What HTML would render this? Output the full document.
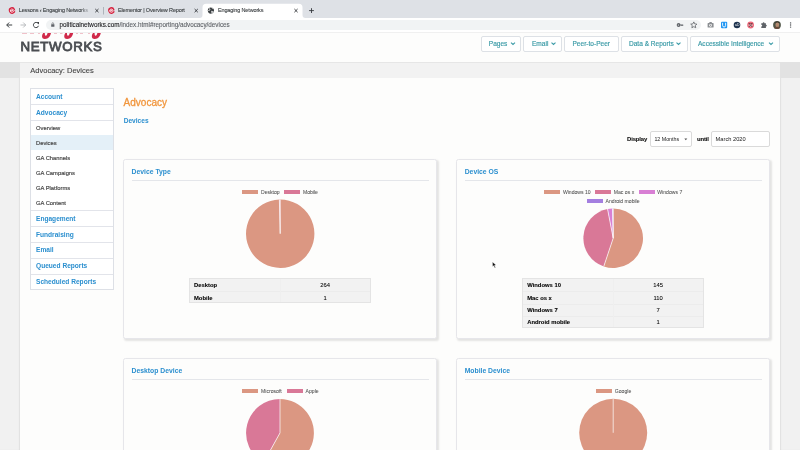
<!DOCTYPE html>
<html><head><meta charset="utf-8">
<style>
*{margin:0;padding:0;box-sizing:border-box}
html,body{width:800px;height:450px;overflow:hidden;background:#fdfdfc;will-change:transform;font-family:"Liberation Sans",sans-serif;position:relative}
.a{position:absolute;white-space:nowrap;line-height:0}
.ss,.nbt{-webkit-text-stroke:.16px currentColor}
.crumb{-webkit-text-stroke:.1px currentColor}
.leg,.tn{-webkit-text-stroke:.06px currentColor}
.h1{-webkit-text-stroke:.3px currentColor}
.inpt{-webkit-text-stroke:0}
#tabbar{left:0;top:0;width:800px;height:18px;background:#dee1e6}
.tabt{font-size:5.5px;letter-spacing:-.14px;color:#3c4043;-webkit-text-stroke:.1px currentColor}
.x{width:6px;height:6px}
#toolbar{left:0;top:18px;width:800px;height:14.5px;background:#fff;border-bottom:1px solid #f0f0f0;line-height:normal}
#pill{left:46px;top:19.9px;width:655px;height:10.4px;border-radius:5.2px;background:#f1f3f4;line-height:normal}
.url{font-size:6.3px;color:#202124;-webkit-text-stroke:.1px currentColor}
.url span{color:#5f6368}
#outerL{left:0;top:62px;width:20px;height:388px;background:#f1f1f1;box-shadow:inset -1px 0 1px #e0e0e0;line-height:normal}
#outerR{left:780px;top:62px;width:20px;height:388px;background:#f1f1f1;box-shadow:inset 1px 0 1px #e0e0e0;line-height:normal}
.bandO{top:62px;height:16px;width:20px;background:#e2e2e2;line-height:normal}
#band{left:20px;top:62px;width:760px;height:16px;background:#f2f2f2;border-top:1px solid #e6e6e6;line-height:normal}
.crumb{font-size:7.5px;color:#444}
.nb{top:36px;height:15.8px;border:1px solid #dde1e6;border-radius:2px;background:#fff;line-height:normal}
.nbt{font-size:6.55px;color:#3a9aa6}
#side{left:30px;top:88px;width:83.6px;height:201.6px;border:1px solid #dde0e6;background:#fff;line-height:normal}
.hl{left:31px;top:135px;width:81.6px;height:15.4px;background:#e4f0f8;line-height:normal}
.dv{left:31px;width:81.6px;height:1px;background:#e2e4ea;line-height:normal}
.sb{font-size:6.6px;font-weight:bold;color:#2b8fcf}
.ss{font-size:5.8px;color:#444}
.h1{font-size:10px;color:#f1963d}
.h2{font-size:6.6px;font-weight:bold;color:#2b8fcf}
.card{width:313.6px;height:180px;border:1px solid #e6e6ea;border-radius:2.5px;background:#fdfdfc;box-shadow:1.5px 1.5px 2px rgba(0,0,0,0.10);line-height:normal}
.ct{font-size:6.8px;font-weight:bold;color:#2b8fcf}
.sep{width:297px;height:1px;background:#e4e6ea;line-height:normal}
.leg{font-size:5.1px;color:#555}
.box{height:4px;width:16px;line-height:normal}
.tb{background:#f2f2f2;border:1px solid #e4e4e4;line-height:normal}
.tr{height:1px;background:#ececec;line-height:normal}
.tc{width:1px;background:#efefef;line-height:normal}
.td{font-size:5.85px;color:#000;font-weight:bold;-webkit-text-stroke:.08px #000}
.tn{font-size:5.85px;color:#000}
.inp{border:1px solid #dadada;border-radius:2px;background:#fff;line-height:normal}
.lab{font-size:5.95px;letter-spacing:-.14px;font-weight:bold;color:#111;-webkit-text-stroke:.1px #111}
.inpt{font-size:5.3px;color:#1a1a1a}
</style></head><body>
<!-- browser chrome -->
<div id="tabbar" class="a"></div>
<div id="toolbar" class="a"></div>
<div id="pill" class="a"></div>
<svg class="a" style="left:0;top:0" width="800" height="33" viewBox="0 0 800 33">
  <!-- active tab -->
  <path d="M199.5 18 Q202.5 18 202.5 15 L202.5 7.5 Q202.5 3.8 206.2 3.8 L298.8 3.8 Q302.5 3.8 302.5 7.5 L302.5 15 Q302.5 18 305.5 18 Z" fill="#fff"/>
  <!-- favicons -->
  <g transform="translate(12 10.5) rotate(-18)"><ellipse rx="3.2" ry="3.35" fill="#d5223f"/><path d="M-1.7 .1 H1.5 Q1.4 -1.5 -.1 -1.5 Q-1.7 -1.5 -1.7 .2 Q-1.7 1.7 .1 1.7 Q1 1.7 1.6 1.1" fill="none" stroke="#fff" stroke-width=".75"/><path d="M1.2 .7 L3.3 .5 L3.3 2 Z" fill="#dee1e6"/></g>
  <g transform="translate(111.4 10.5) rotate(-18)"><ellipse rx="3.2" ry="3.35" fill="#d5223f"/><path d="M-1.7 .1 H1.5 Q1.4 -1.5 -.1 -1.5 Q-1.7 -1.5 -1.7 .2 Q-1.7 1.7 .1 1.7 Q1 1.7 1.6 1.1" fill="none" stroke="#fff" stroke-width=".75"/><path d="M1.2 .7 L3.3 .5 L3.3 2 Z" fill="#dee1e6"/></g>
  <circle cx="210.9" cy="10.6" r="3.1" fill="#3c4043"/>
  <path d="M209 8.3 q1.2 .6 1 1.6 q-.6 .8-1.8 .6 M211.5 11.2 l1.8 .5 l-1.3 1.7 z M211.6 7.7 q.8 1 1.9 .9" fill="none" stroke="#fff" stroke-width=".7"/>
  <!-- close x -->
  <g stroke="#36393d" stroke-width=".95">
    <path d="M95.3 9 l3.2 3.2 M98.5 9 l-3.2 3.2"/>
    <path d="M194.6 9 l3.2 3.2 M197.8 9 l-3.2 3.2"/>
    <path d="M294.4 9 l3.2 3.2 M297.6 9 l-3.2 3.2"/>
    <path d="M311.5 8.2 v4.8 M309.1 10.6 h4.8" stroke-width=".9"/>
  </g>
  <rect x="103" y="7" width=".7" height="7.5" fill="#9aa0a6"/>
  <!-- nav -->
  <g fill="none" stroke="#3c4043" stroke-width="1">
    <path d="M12.2 25 h-5.4 M9.2 22.5 l-2.5 2.5 l2.5 2.5"/>
    <path d="M20.5 25 h5.2 M23.2 22.5 l2.5 2.5 l-2.5 2.5" stroke="#a9acb0" stroke-width=".8"/>
    <path d="M38.2 23.6 a2.6 2.6 0 1 0 .3 2.2"/>
  </g>
  <path d="M36.6 22 h2.4 v2.4 z" fill="#3c4043"/>
</svg>
<div class="a tabt" style="left:18.75px;width:72px;overflow:hidden;line-height:normal;top:7.4px;-webkit-mask-image:linear-gradient(90deg,#000 85%,transparent)">Lessons ‹ Engaging Networks</div>
<div class="a tabt" style="left:118px;top:7.4px;line-height:normal">Elementor | Overview Report</div>
<div class="a tabt" style="left:218px;top:7.4px;line-height:normal">Engaging Networks</div>

<svg class="a" style="left:0;top:18px" width="800" height="14" viewBox="0 18 800 14">
  <rect x="51.2" y="24.2" width="3.2" height="2.6" rx=".3" fill="#5f6368"/>
  <path d="M52 24.3 v-.8 a.8 .8 0 0 1 1.6 0 v.8" fill="none" stroke="#5f6368" stroke-width=".6"/>
  <!-- key -->
  <circle cx="678.6" cy="25" r="1.9" fill="#5f6368"/><circle cx="678.4" cy="25" r=".6" fill="#f1f3f4"/>
  <path d="M680.2 24.5 h3 v1.6 h-.8 v-.6 h-.6 v.6 h-.6 v-.6 h-1 z" fill="#5f6368"/>
  <!-- star -->
  <path d="M693.8 21.9 l.95 2 l2.15 .25 l-1.6 1.45 l.45 2.15 l-1.95 -1.1 l-1.95 1.1 l.45 -2.15 l-1.6 -1.45 l2.15 -.25 z" fill="none" stroke="#5f6368" stroke-width=".8"/>
  <!-- camera -->
  <path d="M707.6 23.4 q0-.5 .5-.5 h1 l.6-.8 h1.8 l.6 .8 h1 q.5 0 .5 .5 v3.7 q0 .5-.5 .5 h-5 q-.5 0-.5-.5 z" fill="#8c8f93"/>
  <circle cx="710.6" cy="25.3" r="1.35" fill="#fff"/><circle cx="710.6" cy="25.3" r=".75" fill="#8c8f93"/>
  <!-- blue U -->
  <rect x="721" y="21.8" width="6.2" height="6.4" rx="1" fill="#2196f3"/>
  <path d="M722.6 22.8 v2.6 q0 1.6 1.5 1.6 q1.5 0 1.5-1.6 v-2.6" fill="none" stroke="#fff" stroke-width=".9"/>
  <!-- dark circle -->
  <circle cx="737" cy="25" r="3.3" fill="#1f3550"/>
  <text x="735" y="26.4" font-size="3.4" fill="#fff" font-family="Liberation Sans">aD</text>
  <!-- red target -->
  <circle cx="750.6" cy="25" r="3.4" fill="#f0697b"/>
  <g stroke="#fff" stroke-width=".45" opacity=".85"><path d="M748.2 23.6 l2.4 2.4 l2.4-2.4 M748.2 26.4 l2.4-2.4 l2.4 2.4 M748.8 25 l1.8 1.8 l1.8-1.8"/></g>
  <!-- puzzle -->
  <path d="M761.3 23.2 h1.4 a.9 .9 0 0 1 1.8 0 h1.4 v1.5 a.9 .9 0 0 1 0 1.8 v1.6 h-4.6 v-1.6 a.9 .9 0 0 0 0-1.8 z" fill="#5f6368"/>
  <!-- avatar -->
  <circle cx="777" cy="25" r="3.9" fill="#4f5446"/>
  <ellipse cx="777.3" cy="24.8" rx="1.9" ry="2.6" fill="#b48a70"/>
  <path d="M775.3 23.2 q2-1.8 4 0 v-1 q-2-1.4-4 0 z" fill="#3b2f28"/>
  <path d="M774 27.6 q3-1.6 6 0 l-.5 1 q-2.5 .8-5 0 z" fill="#6a4a3a"/>
  <!-- dots -->
  <circle cx="790.6" cy="22.9" r=".7" fill="#4a4d51"/><circle cx="790.6" cy="25" r=".7" fill="#4a4d51"/><circle cx="790.6" cy="27.1" r=".7" fill="#4a4d51"/>
</svg>
<div class="a url" style="left:59.6px;top:21.3px;line-height:normal">politicalnetworks.com<span>/index.html#reporting/advocacy/devices</span></div>

<!-- header -->
<svg class="a" style="left:0;top:33px" width="120" height="25" viewBox="0 33 120 25">
  <g fill="#d02a4a">
    <path d="M43.2 33 C42 34.5 41.6 36.8 42.6 38.2 C43.6 39.3 46 39.2 47.8 38.2 C49.6 37.1 50.6 35.2 51 33 L47.6 33 C47.2 34.4 46.6 35.8 45.8 35.8 C45 35.8 44.7 34.5 44.8 33 Z"/>
    <path transform="translate(22.2 0)" d="M43.2 33 C42 34.5 41.6 36.8 42.6 38.2 C43.6 39.3 46 39.2 47.8 38.2 C49.6 37.1 50.6 35.2 51 33 L47.6 33 C47.2 34.4 46.6 35.8 45.8 35.8 C45 35.8 44.7 34.5 44.8 33 Z"/>
    <path transform="translate(49.8 0)" d="M43.2 33 C42 34.5 41.6 36.8 42.6 38.2 C43.6 39.3 46 39.2 47.8 38.2 C49.6 37.1 50.6 35.2 51 33 L47.6 33 C47.2 34.4 46.6 35.8 45.8 35.8 C45 35.8 44.7 34.5 44.8 33 Z"/>
    <g opacity=".35">
      <rect x="22" y="33" width="5" height=".8"/><rect x="30" y="33" width="4" height=".8"/><rect x="38" y="33" width="2" height=".8"/>
      <rect x="54" y="33" width="3" height=".8"/><rect x="60" y="33" width="2.5" height=".8"/><rect x="76" y="33" width="2" height=".8"/>
      <rect x="80" y="33" width="3" height=".8"/><rect x="88" y="33" width="2" height=".8"/>
    </g>
  </g>
</svg>
<div class="a" style="left:20.6px;top:39.2px;font-size:13.3px;color:#4a4d51;letter-spacing:.62px;-webkit-text-stroke:.8px #4a4d51;line-height:normal">NETWORKS</div>

<div class="a nb" style="left:480.8px;width:40.7px"></div>
<div class="a nb" style="left:523.4px;width:38.3px"></div>
<div class="a nb" style="left:564.3px;width:54.6px"></div>
<div class="a nb" style="left:621.3px;width:66.9px"></div>
<div class="a nb" style="left:690.4px;width:89.5px"></div>
<div class="a nbt" style="left:488.8px;top:44.3px">Pages</div>
<div class="a nbt" style="left:532px;top:44.3px">Email</div>
<div class="a nbt" style="left:572.5px;top:44.3px">Peer-to-Peer</div>
<div class="a nbt" style="left:629px;top:44.3px">Data &amp; Reports</div>
<div class="a nbt" style="left:698px;top:44.3px">Accessible Intelligence</div>
<svg class="a" style="left:0;top:0" width="800" height="60" viewBox="0 0 800 60">
  <g fill="none" stroke="#3d9ca8" stroke-width="1.1">
    <path d="M511 42.6 l2 1.8 l2-1.8"/>
    <path d="M551.5 42.6 l2 1.8 l2-1.8"/>
    <path d="M676.5 42.6 l2 1.8 l2-1.8"/>
    <path d="M769 42.6 l2 1.8 l2-1.8"/>
  </g>
</svg>

<!-- outer background -->
<div id="outerL" class="a"></div>
<div id="outerR" class="a"></div>
<div class="a bandO" style="left:0"></div>
<div class="a bandO" style="left:780px"></div>
<div id="band" class="a"></div>
<div class="a crumb" style="left:30.3px;top:70.6px">Advocacy: Devices</div>

<!-- sidebar -->
<div id="side" class="a"></div>
<div class="a hl"></div>
<div class="a dv" style="top:104.2px"></div>
<div class="a dv" style="top:120px"></div>
<div class="a dv" style="top:210.3px"></div>
<div class="a dv" style="top:226.3px"></div>
<div class="a dv" style="top:242.3px"></div>
<div class="a dv" style="top:258px"></div>
<div class="a dv" style="top:273.5px"></div>
<div class="a sb" style="left:36px;top:97px">Account</div>
<div class="a sb" style="left:36px;top:113px">Advocacy</div>
<div class="a ss" style="left:36px;top:127.5px">Overview</div>
<div class="a ss" style="left:36px;top:142.5px">Devices</div>
<div class="a ss" style="left:36px;top:157.8px">GA Channels</div>
<div class="a ss" style="left:36px;top:172.8px">GA Campaigns</div>
<div class="a ss" style="left:36px;top:187.8px">GA Platforms</div>
<div class="a ss" style="left:36px;top:202.8px">GA Content</div>
<div class="a sb" style="left:36px;top:218.5px">Engagement</div>
<div class="a sb" style="left:36px;top:234.5px">Fundraising</div>
<div class="a sb" style="left:36px;top:250.3px">Email</div>
<div class="a sb" style="left:36px;top:266px">Queued Reports</div>
<div class="a sb" style="left:36px;top:281.5px">Scheduled Reports</div>

<!-- main -->
<div class="a h1" style="left:123.6px;top:103.2px">Advocacy</div>
<div class="a h2" style="left:123.7px;top:120.6px">Devices</div>

<div class="a lab" style="left:627px;top:138.6px">Display</div>
<div class="a inp" style="left:650px;top:131px;width:41.6px;height:16.2px"></div>
<div class="a inpt" style="left:654.4px;top:139px">12 Months</div>
<svg class="a" style="left:683.5px;top:137.8px" width="4" height="3"><path d="M0.3 0.5 h3 l-1.5 1.8z" fill="#555"/></svg>
<div class="a lab" style="left:697px;top:138.6px">until</div>
<div class="a inp" style="left:711.4px;top:131px;width:58.2px;height:16.2px"></div>
<div class="a inpt" style="left:715.6px;top:139px;font-size:5.7px">March 2020</div>

<!-- cards -->
<div class="a card" style="left:123px;top:159px"></div>
<div class="a card" style="left:456px;top:159px"></div>
<div class="a card" style="left:123px;top:358px"></div>
<div class="a card" style="left:456px;top:358px"></div>

<div class="a ct" style="left:131.6px;top:171.7px">Device Type</div>
<div class="a ct" style="left:464.7px;top:171.7px">Device OS</div>
<div class="a ct" style="left:131.6px;top:371.1px">Desktop Device</div>
<div class="a ct" style="left:464.7px;top:371.1px">Mobile Device</div>
<div class="a sep" style="left:131.6px;top:179.8px"></div>
<div class="a sep" style="left:464.7px;top:179.8px"></div>
<div class="a sep" style="left:131.6px;top:378.9px"></div>
<div class="a sep" style="left:464.7px;top:378.9px"></div>

<!-- legends -->
<div class="a box" style="left:242.2px;top:190px;background:#db9782"></div>
<div class="a leg" style="left:261px;top:192.2px">Desktop</div>
<div class="a box" style="left:284.4px;top:190px;background:#d97897"></div>
<div class="a leg" style="left:302.9px;top:192.2px">Mobile</div>

<div class="a box" style="left:544px;top:189.8px;background:#db9782"></div>
<div class="a leg" style="left:562.9px;top:192px">Windows 10</div>
<div class="a box" style="left:595px;top:189.8px;background:#d97897"></div>
<div class="a leg" style="left:613.8px;top:192px">Mac os x</div>
<div class="a box" style="left:638.9px;top:189.8px;background:#d87fd4"></div>
<div class="a leg" style="left:657.3px;top:192px">Windows 7</div>
<div class="a box" style="left:587.1px;top:199.1px;background:#a47fe0"></div>
<div class="a leg" style="left:605.6px;top:201.3px">Android mobile</div>

<div class="a box" style="left:242.1px;top:389px;background:#db9782"></div>
<div class="a leg" style="left:261.1px;top:391.2px">Microsoft</div>
<div class="a box" style="left:286.6px;top:389px;background:#d97897"></div>
<div class="a leg" style="left:305.6px;top:391.2px">Apple</div>

<div class="a box" style="left:596.1px;top:389px;background:#db9782"></div>
<div class="a leg" style="left:614.8px;top:391.2px">Google</div>

<!-- pies -->
<svg class="a" style="left:0;top:0" width="800" height="450" viewBox="0 0 800 450" id="pies">
<path d="M280.2 233.7 L280.20 199.50 A34.2 34.2 0 1 1 279.39 199.51 Z" fill="#db9782"/>
<path d="M280.2 233.7 L279.39 199.51 A34.2 34.2 0 0 1 280.20 199.50 Z" fill="#d97897"/>
<path d="M280.2 233.7 L280.20 199.50" stroke="#fff" stroke-width="0.7"/>
<path d="M280.2 233.7 L279.39 199.51" stroke="#fff" stroke-width="0.7"/>
<path d="M613.2 238.2 L613.20 208.40 A29.8 29.8 0 1 1 603.75 266.46 Z" fill="#db9782"/>
<path d="M613.2 238.2 L603.75 266.46 A29.8 29.8 0 0 1 607.54 208.94 Z" fill="#d97897"/>
<path d="M613.2 238.2 L607.54 208.94 A29.8 29.8 0 0 1 612.49 208.41 Z" fill="#d87fd4"/>
<path d="M613.2 238.2 L612.49 208.41 A29.8 29.8 0 0 1 613.20 208.40 Z" fill="#a47fe0"/>
<path d="M613.2 238.2 L613.20 208.40" stroke="#fff" stroke-width="0.7"/>
<path d="M613.2 238.2 L603.75 266.46" stroke="#fff" stroke-width="0.7"/>
<path d="M613.2 238.2 L607.54 208.94" stroke="#fff" stroke-width="0.7"/>
<path d="M613.2 238.2 L612.49 208.41" stroke="#fff" stroke-width="0.7"/>
<path d="M280 432.9 L280.00 399.00 A33.9 33.9 0 1 1 263.56 462.55 Z" fill="#db9782"/>
<path d="M280 432.9 L263.56 462.55 A33.9 33.9 0 0 1 280.00 399.00 Z" fill="#d97897"/>
<path d="M280 432.9 L280.00 399.00" stroke="#fff" stroke-width="0.7"/>
<path d="M280 432.9 L263.56 462.55" stroke="#fff" stroke-width="0.7"/>
<circle cx="613.2" cy="432.8" r="34" fill="#db9782"/>
<path d="M613.2 432.8 L613.2 398.8" stroke="#fff" stroke-width="0.7"/>
</svg>

<!-- tables -->
<div class="a tb" style="left:189.3px;top:278.1px;width:181.4px;height:25.4px"></div>
<div class="a tr" style="left:190.3px;top:291px;width:179.4px"></div>
<div class="a tc" style="left:280px;top:279.1px;height:23.4px"></div>
<div class="a td" style="left:194px;top:285.4px">Desktop</div>
<div class="a tn" style="left:325.1px;top:285.4px;transform:translateX(-50%)">264</div>
<div class="a td" style="left:194px;top:297.6px">Mobile</div>
<div class="a tn" style="left:325.1px;top:297.6px;transform:translateX(-50%)">1</div>

<div class="a tb" style="left:522.3px;top:278.2px;width:181.7px;height:50px"></div>
<div class="a tr" style="left:523.3px;top:291.4px;width:179.7px"></div>
<div class="a tr" style="left:523.3px;top:303.6px;width:179.7px"></div>
<div class="a tr" style="left:523.3px;top:315.8px;width:179.7px"></div>
<div class="a tc" style="left:612.6px;top:279.2px;height:48px"></div>
<div class="a td" style="left:527.2px;top:285.4px">Windows 10</div>
<div class="a tn" style="left:658.2px;top:285.4px;transform:translateX(-50%)">145</div>
<div class="a td" style="left:527.2px;top:297.6px">Mac os x</div>
<div class="a tn" style="left:658.2px;top:297.6px;transform:translateX(-50%)">110</div>
<div class="a td" style="left:527.2px;top:309.8px">Windows 7</div>
<div class="a tn" style="left:658.2px;top:309.8px;transform:translateX(-50%)">7</div>
<div class="a td" style="left:527.2px;top:322px">Android mobile</div>
<div class="a tn" style="left:658.2px;top:322px;transform:translateX(-50%)">1</div>

<!-- cursor -->
<svg class="a" style="left:491px;top:261px" width="7" height="9" viewBox="0 0 7 9">
  <path d="M1.4 0.9 L1.6 5.6 L2.7 4.7 L3.9 7 L4.6 6.6 L3.5 4.4 L5 4.1 Z" fill="#111" stroke="#fff" stroke-width=".4"/>
</svg>
</body></html>
